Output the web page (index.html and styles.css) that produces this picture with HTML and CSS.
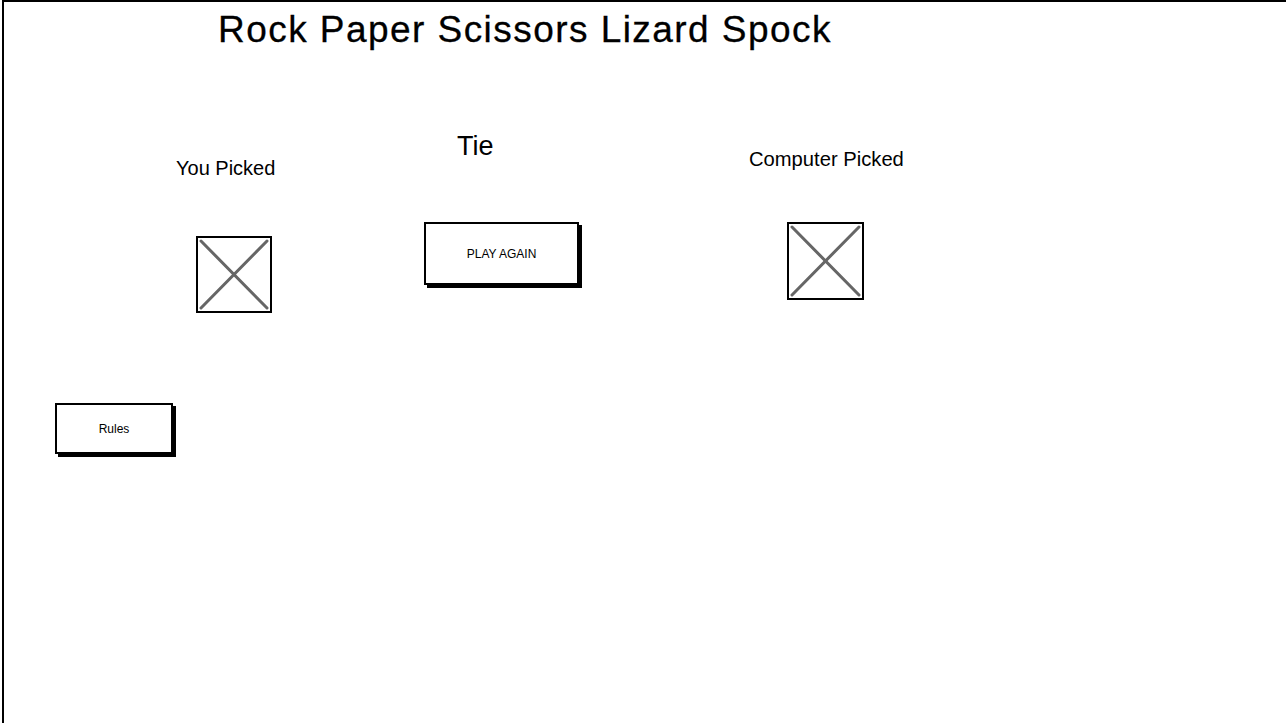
FILE: index.html
```html
<!DOCTYPE html>
<html lang="en">
<head>
<meta charset="utf-8">
<title>Rock Paper Scissors Lizard Spock</title>
<link rel="stylesheet" href="styles.css">
</head>
<body>
<div class="frame">
  <h1 class="title">Rock Paper Scissors Lizard Spock</h1>
  <div class="stage">
    <div class="col col-you">
      <div class="label label-you">You Picked</div>
      <div class="placeholder ph-you">
        <svg viewBox="0 0 72 73" width="72" height="73" aria-hidden="true">
          <line x1="3" y1="3" x2="69" y2="70" stroke="#666" stroke-width="3" stroke-linecap="round"/>
          <line x1="69" y1="3" x2="3" y2="70" stroke="#666" stroke-width="3" stroke-linecap="round"/>
        </svg>
      </div>
    </div>
    <div class="col col-mid">
      <div class="label label-tie">Tie</div>
      <button class="btn btn-play">PLAY AGAIN</button>
    </div>
    <div class="col col-cpu">
      <div class="label label-cpu">Computer Picked</div>
      <div class="placeholder ph-cpu">
        <svg viewBox="0 0 73 74" width="73" height="74" aria-hidden="true">
          <line x1="3" y1="3" x2="70" y2="71" stroke="#666" stroke-width="3" stroke-linecap="round"/>
          <line x1="70" y1="3" x2="3" y2="71" stroke="#666" stroke-width="3" stroke-linecap="round"/>
        </svg>
      </div>
    </div>
  </div>
  <button class="btn btn-rules">Rules</button>
</div>
</body>
</html>
```
FILE: styles.css
```css
html, body {
  margin: 0;
  padding: 0;
  background: #fff;
  overflow: hidden;
}
body {
  font-family: "Liberation Sans", Arial, sans-serif;
  color: #000;
}
.frame {
  margin-left: 2px;
  border-top: 2px solid #000;
  border-left: 2px solid #000;
  height: 740px;
  box-sizing: border-box;
}
.title {
  margin: 0;
  padding: 8px 0 0 214px;
  font-size: 37px;
  line-height: 40px;
  font-weight: normal;
  letter-spacing: 1.45px;
  white-space: nowrap;
  -webkit-text-stroke: 0.3px #000;
}
.stage {
  display: flex;
  align-items: flex-start;
  padding-left: 172px;
}
.col {
  display: flex;
  flex-direction: column;
  align-items: flex-start;
  flex: none;
}
.col-you {
  width: 248px;
  padding-top: 106px;
}
.col-mid {
  width: 325px;
  padding-top: 81px;
}
.col-cpu {
  padding-top: 97px;
}
.label {
  white-space: nowrap;
}
.label-you {
  font-size: 20px;
  line-height: 24px;
}
.label-tie {
  font-size: 27px;
  line-height: 30px;
  margin-left: 33px;
}
.label-cpu {
  font-size: 20.2px;
  line-height: 24px;
}
.placeholder {
  border: 2px solid #000;
  background: #fff;
  display: flex;
}
.placeholder svg {
  display: block;
}
.ph-you {
  margin-top: 56px;
  margin-left: 20px;
}
.ph-cpu {
  margin-top: 51px;
  margin-left: 38px;
}
.btn {
  font-family: "Liberation Sans", Arial, sans-serif;
  font-size: 12px;
  color: #000;
  background: #fff;
  border: 2px solid #000;
  box-shadow: 3px 3px 0 #000;
  padding: 0;
  margin: 0;
  box-sizing: border-box;
  display: block;
}
.btn-play {
  margin-top: 61px;
  width: 155px;
  height: 63px;
}
.btn-rules {
  margin: 90px 0 0 51px;
  width: 118px;
  height: 51px;
}
```
